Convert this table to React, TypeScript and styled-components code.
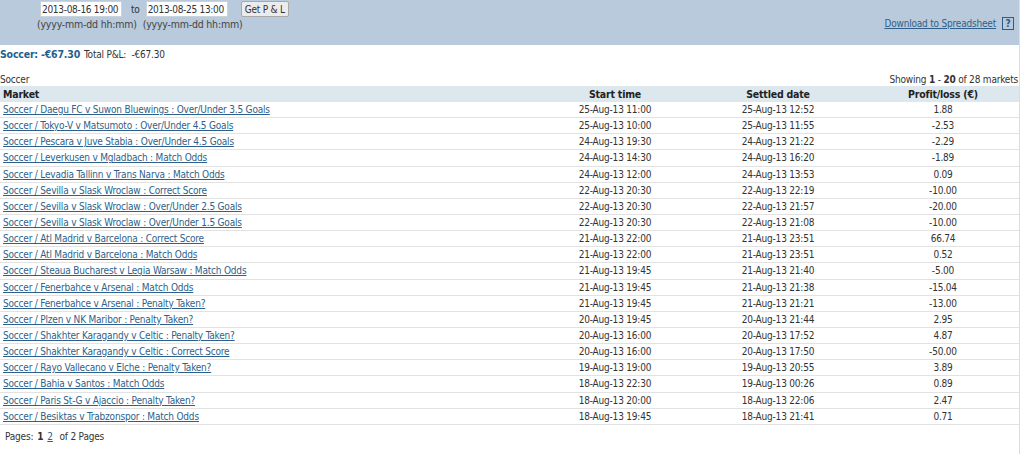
import React from "react";
import styled, { createGlobalStyle } from "styled-components";

const GlobalStyle = createGlobalStyle`
  body {
    margin: 0;
    background: #fff;
    font-family: "DejaVu Sans Condensed", "Liberation Sans", Arial, sans-serif;
    font-size: 10px;
    letter-spacing: -0.2px;
    color: #333;
  }
`;

const Page = styled.div`
  width: 1020px;
  min-height: 454px;
  border-right: 1px solid #dcdcdc;
  box-sizing: border-box;
`;

const Header = styled.div`
  height: 45px;
  background: #b8cadb;
  display: flex;
  align-items: flex-start;
  justify-content: space-between;
  padding: 1px 5px 0 37px;
  box-sizing: border-box;
`;

const FilterForm = styled.div`
  display: grid;
  grid-template-columns: auto auto auto auto;
  row-gap: 1px;
  align-items: center;
`;

const DateInput = styled.input`
  width: 82px;
  height: 16px;
  margin: 0 3px;
  padding: 0 0 0 1px;
  border: 1px solid #c9d3dc;
  background: #fff;
  font-family: inherit;
  font-size: 10px;
  letter-spacing: -0.3px;
  color: #333;
  box-sizing: border-box;
`;

const ToLabel = styled.span`
  padding: 0 3px 0 6px;
  color: #333;
`;

const GetButton = styled.button`
  margin-left: 10px;
  height: 16px;
  padding: 0 3px;
  font-family: inherit;
  font-size: 10px;
  letter-spacing: -0.2px;
  color: #333;
  background: #ececec;
  border: 1px solid #a9a9a9;
  border-radius: 2px;
`;

const Hint = styled.span`
  justify-self: start;
  margin-right: -20px;
  white-space: nowrap;
  font-size: 10.5px;
  letter-spacing: -0.2px;
  color: #444;
`;

const DownloadArea = styled.div`
  display: flex;
  align-items: center;
  gap: 6px;
  margin-top: 16px;
`;

const Link = styled.a`
  color: #2f5f8a;
  text-decoration: underline;
  cursor: pointer;
`;

const HelpBox = styled.span`
  display: inline-flex;
  align-items: center;
  justify-content: center;
  width: 10px;
  height: 11px;
  border: 1px solid #2b5c8a;
  color: #2b5c8a;
  font-weight: bold;
  font-size: 10px;
`;

const Summary = styled.div`
  height: 16px;
  padding-top: 1px;
  display: flex;
  align-items: center;
  gap: 4px;
`;

const SportTotal = styled.span`
  color: #1e5f8e;
  font-weight: bold;
  font-size: 10.5px;
`;

const CaptionRow = styled.div`
  display: flex;
  justify-content: space-between;
  align-items: center;
  margin-top: 10px;
  height: 14px;
  padding-right: 1px;
`;

const Table = styled.table`
  width: 100%;
  border-collapse: collapse;
  table-layout: fixed;
`;

const Th = styled.th<{ $align?: string; $w?: number }>`
  background: #dde7ee;
  height: 16px;
  padding: 0 3px;
  font-weight: bold;
  font-size: 10.5px;
  color: #222;
  text-align: ${(p) => p.$align || "center"};
  width: ${(p) => (p.$w ? `${p.$w}px` : "auto")};
`;

const Td = styled.td<{ $align?: string }>`
  height: 15.15px;
  padding: 0 3px;
  border-bottom: 1px solid #e2e2e2;
  text-align: ${(p) => p.$align || "center"};
  white-space: nowrap;
  overflow: hidden;
`;

const Pager = styled.div`
  padding: 6px 5px 4px;
  display: flex;
  gap: 4px;
`;

const Current = styled.b`
  color: #333;
`;

const rows: [string, string, string, string][] = [
  ["Soccer / Daegu FC v Suwon Bluewings : Over/Under 3.5 Goals", "25-Aug-13 11:00", "25-Aug-13 12:52", "1.88"],
  ["Soccer / Tokyo-V v Matsumoto : Over/Under 4.5 Goals", "25-Aug-13 10:00", "25-Aug-13 11:55", "-2.53"],
  ["Soccer / Pescara v Juve Stabia : Over/Under 4.5 Goals", "24-Aug-13 19:30", "24-Aug-13 21:22", "-2.29"],
  ["Soccer / Leverkusen v Mgladbach : Match Odds", "24-Aug-13 14:30", "24-Aug-13 16:20", "-1.89"],
  ["Soccer / Levadia Tallinn v Trans Narva : Match Odds", "24-Aug-13 12:00", "24-Aug-13 13:53", "0.09"],
  ["Soccer / Sevilla v Slask Wroclaw : Correct Score", "22-Aug-13 20:30", "22-Aug-13 22:19", "-10.00"],
  ["Soccer / Sevilla v Slask Wroclaw : Over/Under 2.5 Goals", "22-Aug-13 20:30", "22-Aug-13 21:57", "-20.00"],
  ["Soccer / Sevilla v Slask Wroclaw : Over/Under 1.5 Goals", "22-Aug-13 20:30", "22-Aug-13 21:08", "-10.00"],
  ["Soccer / Atl Madrid v Barcelona : Correct Score", "21-Aug-13 22:00", "21-Aug-13 23:51", "66.74"],
  ["Soccer / Atl Madrid v Barcelona : Match Odds", "21-Aug-13 22:00", "21-Aug-13 23:51", "0.52"],
  ["Soccer / Steaua Bucharest v Legia Warsaw : Match Odds", "21-Aug-13 19:45", "21-Aug-13 21:40", "-5.00"],
  ["Soccer / Fenerbahce v Arsenal : Match Odds", "21-Aug-13 19:45", "21-Aug-13 21:38", "-15.04"],
  ["Soccer / Fenerbahce v Arsenal : Penalty Taken?", "21-Aug-13 19:45", "21-Aug-13 21:21", "-13.00"],
  ["Soccer / Plzen v NK Maribor : Penalty Taken?", "20-Aug-13 19:45", "20-Aug-13 21:44", "2.95"],
  ["Soccer / Shakhter Karagandy v Celtic : Penalty Taken?", "20-Aug-13 16:00", "20-Aug-13 17:52", "4.87"],
  ["Soccer / Shakhter Karagandy v Celtic : Correct Score", "20-Aug-13 16:00", "20-Aug-13 17:50", "-50.00"],
  ["Soccer / Rayo Vallecano v Elche : Penalty Taken?", "19-Aug-13 19:00", "19-Aug-13 20:55", "3.89"],
  ["Soccer / Bahia v Santos : Match Odds", "18-Aug-13 22:30", "19-Aug-13 00:26", "0.89"],
  ["Soccer / Paris St-G v Ajaccio : Penalty Taken?", "18-Aug-13 20:00", "18-Aug-13 22:06", "2.47"],
  ["Soccer / Besiktas v Trabzonspor : Match Odds", "18-Aug-13 19:45", "18-Aug-13 21:41", "0.71"],
];

const App: React.FC = () => {
  return (
    <Page>
      <GlobalStyle />
      <Header>
        <FilterForm>
          <DateInput defaultValue="2013-08-16 19:00" />
          <ToLabel>to</ToLabel>
          <DateInput defaultValue="2013-08-25 13:00" />
          <GetButton>Get P &amp; L</GetButton>
          <Hint>(yyyy-mm-dd hh:mm)</Hint>
          <span />
          <Hint>(yyyy-mm-dd hh:mm)</Hint>
          <span />
        </FilterForm>
        <DownloadArea>
          <Link>Download to Spreadsheet</Link>
          <HelpBox>?</HelpBox>
        </DownloadArea>
      </Header>
      <Summary>
        <SportTotal>Soccer: -€67.30</SportTotal>
        <span>Total P&amp;L:&nbsp; -€67.30</span>
      </Summary>
      <CaptionRow>
        <span>Soccer</span>
        <span>
          Showing <Current>1</Current> - <Current>20</Current> of 28 markets
        </span>
      </CaptionRow>
      <Table>
        <thead>
          <tr>
            <Th $align="left">Market</Th>
            <Th $w={142}>Start time</Th>
            <Th $w={172}>Settled date</Th>
            <Th $w={146}>Profit/loss (€)</Th>
          </tr>
        </thead>
        <tbody>
          {rows.map(([market, start, settled, pl], i) => (
            <tr key={i}>
              <Td $align="left">
                <Link>{market}</Link>
              </Td>
              <Td>{start}</Td>
              <Td>{settled}</Td>
              <Td>{pl}</Td>
            </tr>
          ))}
        </tbody>
      </Table>
      <Pager>
        <span>Pages:</span>
        <Current>1</Current>
        <Link>2</Link>
        <span>&nbsp;of 2 Pages</span>
      </Pager>
    </Page>
  );
};

export default App;
